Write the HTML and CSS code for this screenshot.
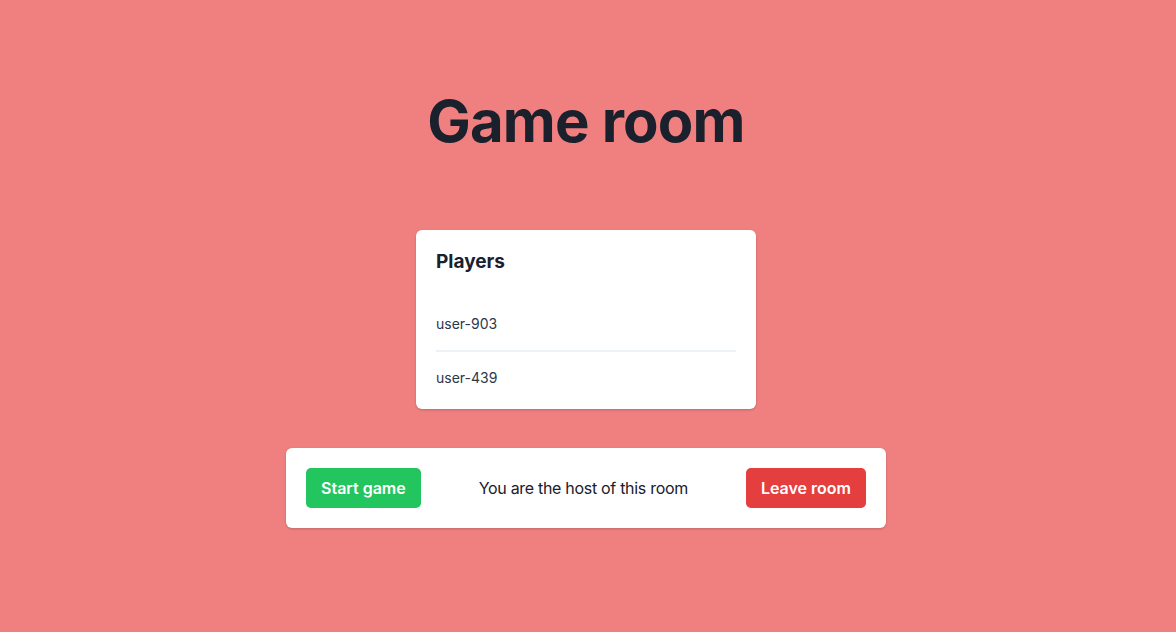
FILE: index.html
```html
<!DOCTYPE html>
<html lang="en">
<head>
<meta charset="utf-8">
<title>Game room</title>
<link rel="stylesheet" href="styles.css">
</head>
<body>
<main class="page">
  <h1 class="title">Game room</h1>
  <section class="card players">
    <h2 class="players-title">Players</h2>
    <ul class="player-list">
      <li class="player">user-903</li>
      <li class="player">user-439</li>
    </ul>
  </section>
  <section class="card actions">
    <button class="btn btn-start">Start game</button>
    <span class="host-note">You are the host of this room</span>
    <button class="btn btn-leave">Leave room</button>
  </section>
</main>
</body>
</html>
```

FILE: styles.css
```css
html, body {
  margin: 0;
  padding: 0;
  height: 100%;
}
body {
  background: #f08080;
  font-family: Inter, "Noto Sans", sans-serif;
  color: #1a202c;
}
.page {
  display: flex;
  flex-direction: column;
  align-items: center;
  padding-top: 85px;
  padding-right: 4px;
}
.title {
  margin: 0;
  font-size: 58px;
  line-height: 72px;
  font-weight: 700;
  letter-spacing: -0.8px;
  color: #1a202c;
}
.card {
  background: #fff;
  border-radius: 6px;
  box-shadow: 0 1px 3px rgba(0,0,0,0.12), 0 1px 2px rgba(0,0,0,0.08);
}
.players {
  margin-top: 73px;
  width: 340px;
  box-sizing: border-box;
  padding: 20px 20px 5px;
}
.players-title {
  margin: 0;
  font-size: 19px;
  line-height: 24px;
  font-weight: 700;
}
.player-list {
  list-style: none;
  margin: 24px 0 0;
  padding: 0;
}
.player {
  padding: 14px 0;
  font-size: 14px;
  line-height: 24px;
  color: #2d3748;
}
.player + .player {
  border-top: 2px solid #edf2f7;
}
.actions {
  margin-top: 39px;
  width: 600px;
  box-sizing: border-box;
  padding: 20px;
  display: flex;
  align-items: center;
  justify-content: space-between;
}
.btn {
  height: 40px;
  border: none;
  border-radius: 5px;
  padding: 0 15px;
  font-family: Inter, "Noto Sans", sans-serif;
  font-size: 16px;
  font-weight: 600;
  color: #fff;
}
.btn-start {
  background: #22c55e;
}
.btn-leave {
  background: #e53e3e;
}
.host-note {
  font-size: 16px;
  letter-spacing: -0.3px;
  color: #1a202c;
}
```
